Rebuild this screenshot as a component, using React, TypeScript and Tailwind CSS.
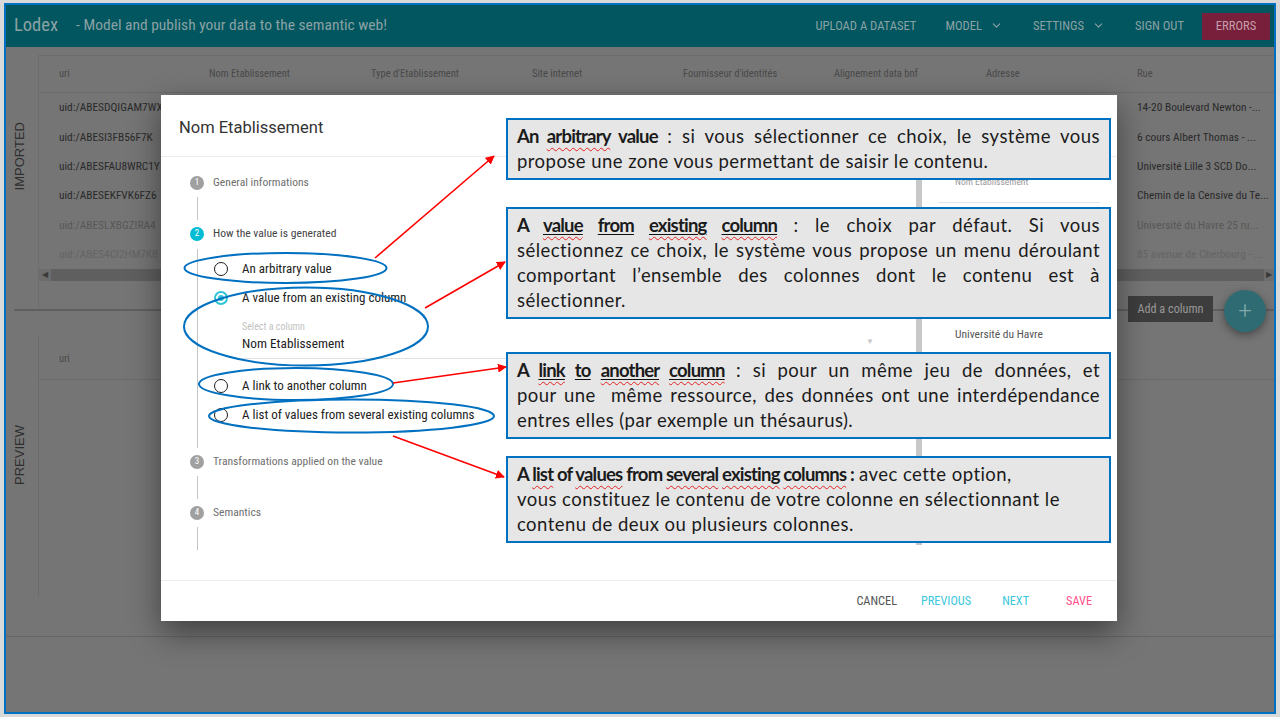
import { ChevronDown } from 'lucide-react';
import type { ReactNode } from 'react';

const NARROW = "font-['Liberation_Sans_Narrow','Roboto_Condensed','Roboto',sans-serif]";

const columns = [
  'uri',
  'Nom Etablissement',
  "Type d'Etablissement",
  'Site internet',
  "Fournisseur d'identités",
  'Alignement data bnf',
  'Adresse',
  'Rue',
];

const rows = [
  { uid: 'uid:/ABESDQIGAM7WX', rue: '14-20 Boulevard Newton -...', tone: 'text-[#2a2a2a]' },
  { uid: 'uid:/ABESI3FB56F7K', rue: '6 cours Albert Thomas - ...', tone: 'text-[#2a2a2a]' },
  { uid: 'uid:/ABESFAU8WRC1Y', rue: 'Université Lille 3 SCD Do...', tone: 'text-[#2a2a2a]' },
  { uid: 'uid:/ABESEKFVK6FZ6', rue: 'Chemin de la Censive du Te...', tone: 'text-[#2a2a2a]' },
  { uid: 'uid:/ABESLXBGZIRA4', rue: 'Université du Havre 25 ru...', tone: 'text-[#585858]' },
  { uid: 'uid:/ABES4CI2HM7KB', rue: '85 avenue de Cherbourg - ...', tone: 'text-[#646464]' },
];

const grid = 'grid grid-cols-[150px_162px_161px_151px_151px_152px_151px_1fr]';

function Header() {
  return (
    <header className={`flex h-[42px] shrink-0 items-center bg-[#01565f] pl-[8px] pr-[4px] text-[#8ba2a5] ${NARROW}`}>
      <span className="text-[18.5px]">Lodex</span>
      <span className="ml-[18px] text-[15.5px]">- Model and publish your data to the semantic web!</span>
      <nav className="ml-auto flex items-center text-[12.6px]">
        <span>UPLOAD A DATASET</span>
        <span className="ml-[29px] flex items-center gap-[8px]">
          MODEL <ChevronDown size={13} strokeWidth={2} />
        </span>
        <span className="ml-[30px] flex items-center gap-[8px]">
          SETTINGS <ChevronDown size={13} strokeWidth={2} />
        </span>
        <span className="ml-[30px]">SIGN OUT</span>
        <span className="ml-[18px] flex h-[27px] w-[68px] items-center justify-center bg-[#771f3b] text-[#c39fa9]">
          ERRORS
        </span>
      </nav>
    </header>
  );
}

function SideLabel({ text, top }: { text: string; top: string }) {
  return (
    <div className={`flex w-[28px] shrink-0 items-start justify-center ${top}`}>
      <span className="rotate-180 font-['Liberation_Sans',sans-serif] text-[13px] leading-[16px] text-[#2e2e2e] [writing-mode:vertical-rl]">
        {text}
      </span>
    </div>
  );
}

function Imported() {
  return (
    <section className="flex h-[262px] shrink-0">
      <SideLabel text="IMPORTED" top="pt-[75px]" />
      <div className={`ml-[4px] mt-[8px] flex-1 border-l border-t border-[#6d6d6d] ${NARROW}`}>
        <div className={`${grid} h-[37px] items-center border-b border-[#6a6a6a] text-[10.5px] text-[#4a4a4a]`}>
          {columns.map((c) => (
            <div key={c} className="truncate pl-[20px]">
              {c}
            </div>
          ))}
        </div>
        {rows.map((r) => (
          <div key={r.uid} className={`${grid} h-[29.4px] items-center text-[11.4px] ${r.tone}`}>
            <div className="pl-[20px]">{r.uid}</div>
            <div />
            <div />
            <div />
            <div />
            <div />
            <div />
            <div className="truncate pl-[20px]">{r.rue}</div>
          </div>
        ))}
        <div className="flex h-[12px] items-center bg-[#6d6d6d] text-[8px] text-[#3a3a3a]">
          <span className="w-[12px] text-center">◀</span>
          <div className="h-full flex-1 bg-[#5f5f5f]" />
          <span className="w-[10px] text-center">▶</span>
        </div>
      </div>
    </section>
  );
}

function Preview() {
  return (
    <section className="flex h-[325px] shrink-0">
      <SideLabel text="PREVIEW" top="pt-[114px]" />
      <div className={`ml-[4px] mt-[24px] h-[262px] flex-1 border-l border-[#6b6b6b] ${NARROW}`}>
        <div className="flex h-[45px] items-center border-b border-[#6a6a6a] pl-[20px] pt-[3px] text-[10.5px] text-[#4a4a4a]">
          uri
        </div>
      </div>
    </section>
  );
}

function StepCircle({ n, active }: { n: number; active?: boolean }) {
  return (
    <span
      className={`flex h-[14px] w-[14px] shrink-0 items-center justify-center rounded-full text-[9px] text-white ${
        active ? 'bg-[#00bcd4]' : 'bg-[#a0a0a0]'
      }`}
    >
      {n}
    </span>
  );
}

function Step({ n, label, active }: { n: number; label: string; active?: boolean }) {
  return (
    <div className="flex h-[24px] items-center">
      <StepCircle n={n} active={active} />
      <span className={`ml-[9px] text-[11.6px] ${active ? 'text-[#444]' : 'text-[#6f6f6f]'}`}>{label}</span>
    </div>
  );
}

function Connector() {
  return (
    <div className="ml-[7px] h-[27px] py-[2px]">
      <div className="h-full w-px bg-[#c4c4c4]" />
    </div>
  );
}

function Radio({ label, checked }: { label: string; checked?: boolean }) {
  return (
    <div className="flex h-[29px] items-center">
      {checked ? (
        <span className="flex h-[14px] w-[14px] items-center justify-center rounded-full border-2 border-[#2ec4d8]">
          <span className="h-[6px] w-[6px] rounded-full bg-[#2ec4d8]" />
        </span>
      ) : (
        <span className="h-[14px] w-[14px] rounded-full border-[1.5px] border-[#1e1e1e]" />
      )}
      <span className="ml-[14px] text-[13px] text-[#222]">{label}</span>
    </div>
  );
}

function Modal() {
  return (
    <div className={`absolute left-[155px] top-[90px] flex h-[526px] w-[956px] flex-col bg-white shadow-[0_12px_30px_rgba(0,0,0,0.45)] ${NARROW}`}>
      <div className="flex h-[62px] shrink-0 items-center border-b border-[#ebebeb] pl-[18px] pt-[5px] font-['Roboto',sans-serif] text-[16.5px] text-[#333]">
        Nom Etablissement
      </div>
      <div className="flex flex-1">
        <div className="flex-1 pl-[29px] pt-[14px]">
          <Step n={1} label="General informations" />
          <Connector />
          <Step n={2} label="How the value is generated" active />
          <div className="ml-[7px] mt-[3px] h-[199px] border-l border-[#c4c4c4] pl-[16px] pt-[5px]">
            <Radio label="An arbitrary value" />
            <Radio label="A value from an existing column" checked />
            <div className="relative ml-[26px] w-[640px] border-b border-[#e2e2e2] pb-[6px] pl-[2px] pt-[9px]">
              <div className="h-[12px] text-[10px] leading-[12px] text-[#c2c2c2]">Select a column</div>
              <div className="mt-[3px] h-[16px] text-[13.3px] leading-[16px] text-[#222]">Nom Etablissement</div>
              <span className="absolute right-[6px] top-[24px] text-[8px] text-[#c8c8c8]">▼</span>
            </div>
            <div className="pt-[12px]">
              <Radio label="A link to another column" />
              <Radio label="A list of values from several existing columns" />
            </div>
          </div>
          <div className="pt-[2px]">
            <Step n={3} label="Transformations applied on the value" />
          </div>
          <Connector />
          <Step n={4} label="Semantics" />
          <Connector />
        </div>
        <div className="mt-[3px] h-[385px] w-[6px] shrink-0 bg-[#c8c8c8]" />
        <div className="w-[195px] shrink-0 pl-[16px] pr-[17px]">
          <div className="h-[46px] border-b border-[#e4e4e4] pl-[17px] pt-[19px] text-[9.5px] leading-[12px] text-[#9a9a9a]">
            Nom Etablissement
          </div>
          <div className="mt-[125px] pl-[17px] text-[11.5px] leading-[12px] text-[#555]">Université du Havre</div>
        </div>
      </div>
      <div className="flex h-[41px] shrink-0 items-center justify-end border-t border-[#ededed] pr-[25px] text-[12.3px]">
        <span className="text-[#555]">CANCEL</span>
        <span className="ml-[24px] text-[#3cc8dc]">PREVIOUS</span>
        <span className="ml-[31px] text-[#3cc8dc]">NEXT</span>
        <span className="ml-[37px] text-[#ff4f8a]">SAVE</span>
      </div>
    </div>
  );
}

function Sq({ children }: { children: ReactNode }) {
  return (
    <span className="underline decoration-[#e42222] decoration-wavy decoration-1 underline-offset-[4px]">{children}</span>
  );
}

function Ul({ children }: { children: ReactNode }) {
  return <span className="underline decoration-[#111] decoration-1 underline-offset-[2px]">{children}</span>;
}

function B({ children }: { children: ReactNode }) {
  return <b className="tracking-[-0.8px]">{children}</b>;
}

function J({ children }: { children: ReactNode }) {
  return <div className="text-justify [text-align-last:justify]">{children}</div>;
}

function Note({ children, className }: { children: ReactNode; className: string }) {
  return (
    <div
      className={`w-[605px] border-2 border-[#0070c0] bg-[#e6e6e6] px-[9px] py-[4px] font-['Lato',sans-serif] text-[18.5px] leading-[25px] tracking-[0.45px] text-[#1b1b1b] ${className}`}
    >
      {children}
    </div>
  );
}

function Annotations() {
  return (
    <div className="absolute left-[506px] top-[118px] flex flex-col">
      <Note className="">
        <J>
          <B>
            An <Sq>arbitrary</Sq> value
          </B>{' '}
          : si vous sélectionner ce choix, le système vous
        </J>
        <div>propose une zone vous permettant de saisir le contenu.</div>
      </Note>
      <Note className="mt-[27px]">
        <J>
          <B>
            A{' '}
            <Ul>
              <Sq>value</Sq>
            </Ul>{' '}
            <Ul>from</Ul>{' '}
            <Ul>
              <Sq>existing</Sq>
            </Ul>{' '}
            <Ul>
              <Sq>column</Sq>
            </Ul>
          </B>{' '}
          : le choix par défaut. Si vous
        </J>
        <J>sélectionnez ce choix, le système vous propose un menu déroulant</J>
        <J>comportant l’ensemble des colonnes dont le contenu est à</J>
        <div>sélectionner.</div>
      </Note>
      <Note className="mt-[33px]">
        <J>
          <B>
            A{' '}
            <Ul>
              <Sq>link</Sq>
            </Ul>{' '}
            <Ul>to</Ul>{' '}
            <Ul>
              <Sq>another</Sq>
            </Ul>{' '}
            <Ul>
              <Sq>column</Sq>
            </Ul>
          </B>{' '}
          : si pour un même jeu de données, et
        </J>
        <J>pour une {'\u00a0'}même ressource, des données ont une interdépendance</J>
        <div>entres elles (par exemple un thésaurus).</div>
      </Note>
      <Note className="mt-[17px]">
        <div>
          <B>
            A <Sq>list</Sq> of <Sq>values</Sq> from <Sq>several</Sq> <Sq>existing</Sq> <Sq>columns</Sq> :
          </B>{' '}
          avec cette option,
        </div>
        <div>vous constituez le contenu de votre colonne en sélectionnant le</div>
        <div>contenu de deux ou plusieurs colonnes.</div>
      </Note>
    </div>
  );
}

function Marks() {
  return (
    <svg className="pointer-events-none absolute left-0 top-0" width={1280} height={717} viewBox="0 0 1280 717">
      <defs>
        <marker id="head" viewBox="0 0 10 10" refX="9" refY="5" markerWidth="9" markerHeight="9" markerUnits="userSpaceOnUse" orient="auto">
          <path d="M0 0 L10 5 L0 10 z" fill="#ff0000" />
        </marker>
      </defs>
      <g fill="none" stroke="#0070c0" strokeWidth="2">
        <ellipse cx="285.5" cy="268" rx="101" ry="15" />
        <ellipse cx="306" cy="326.5" rx="122" ry="39" />
        <ellipse cx="296" cy="384" rx="97" ry="16" />
        <ellipse cx="351.5" cy="416" rx="142.5" ry="16.5" />
      </g>
      <g stroke="#ff0000" strokeWidth="1.6" markerEnd="url(#head)">
        <line x1="375" y1="258" x2="494" y2="156" />
        <line x1="425" y1="308" x2="505" y2="262" />
        <line x1="393" y1="383" x2="506" y2="367" />
        <line x1="393" y1="436" x2="504" y2="477" />
      </g>
    </svg>
  );
}

export default function App() {
  return (
    <div className="relative h-[717px] w-[1280px] overflow-hidden bg-[#d9d9d9] pl-[4px] pt-[3px] font-['Roboto',sans-serif]">
      <div className="relative flex h-[711px] w-[1272px] flex-col overflow-hidden border-2 border-[#0070c0] bg-[#757575]">
        <Header />
        <Imported />
        <div className="ml-[8px] h-[2px] shrink-0 bg-[#5f5f5f]" />
        <Preview />
        <div className="h-px shrink-0 bg-[#666]" />

        {/* floating bits behind the dialog */}
        <div className={`absolute left-[1122px] top-[291px] flex h-[26px] w-[85px] items-center justify-center bg-[#3d3d3d] text-[12.2px] text-[#999] ${NARROW}`}>
          Add a column
        </div>
        <div className="absolute left-[1218px] top-[285px] flex h-[42px] w-[42px] items-center justify-center rounded-full bg-[#2e6b72] text-[24px] font-light leading-none text-[#7fa8ac] shadow-[0_3px_8px_rgba(0,0,0,0.4)]">
          +
        </div>

        <Modal />
      </div>
      <Annotations />
      <Marks />
    </div>
  );
}
